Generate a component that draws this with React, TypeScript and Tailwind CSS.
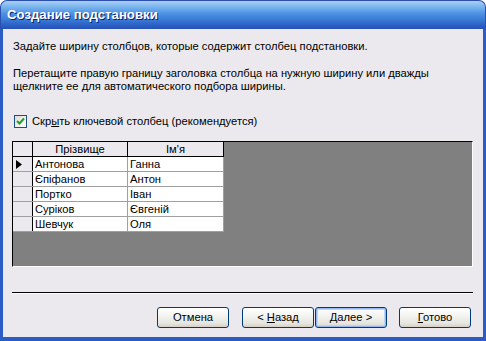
import React from "react";

const font = { fontFamily: '"Liberation Sans", Arial, sans-serif' };

function Btn({ children, def }: { children: React.ReactNode; def?: boolean }) {
  return (
    <div
      className={
        "w-[72px] h-[21px] rounded-[3px] border border-[#003c74] flex items-center justify-center text-[11.2px] text-black bg-[linear-gradient(to_bottom,#ffffff_0%,#f4f4f0_40%,#e6e6e0_80%,#d6d0c5_100%)] " +
        (def ? "shadow-[inset_0_0_0_1px_#97b8ec,inset_0_0_0_2px_#bcd4f6]" : "")
      }
    >
      <span className="whitespace-pre">{children}</span>
    </div>
  );
}

const rows = [
  ["Антонова", "Ганна"],
  ["Єпіфанов", "Антон"],
  ["Портко", "Іван"],
  ["Суріков", "Євгеній"],
  ["Шевчук", "Оля"],
];

export default function App() {
  return (
    <div className="w-[486px] h-[341px] flex flex-col bg-white" style={font}>
      <div className="h-[29px] shrink-0 rounded-t-[7px] bg-[linear-gradient(to_bottom,#a9d0f5_0%,#7db6ee_20%,#4c92e3_45%,#3a7ed8_65%,#2d62c6_85%,#2650b6_100%)] border-t border-x border-[#2a4fae] flex items-center pl-[6px]">
        <span className="text-white font-bold text-[13.2px] [text-shadow:1px_1px_0_#0a1f6a]">
          Создание подстановки
        </span>
      </div>
      <div className="flex-1 flex flex-col bg-[#ebe9ed] border-l-[3px] border-r-[3px] border-b-[4px] border-[#2b5cc6] pl-[9px] pr-[10px] text-[11.2px] text-black leading-[13px]">
        <div className="mt-[11px] pl-[1px]">
          Задайте ширину столбцов, которые содержит столбец подстановки.
        </div>
        <div className="mt-[14px] pl-[1px]">
          Перетащите правую границу заголовка столбца на нужную ширину или дважды
          <br />
          щелкните ее для автоматического подбора ширины.
        </div>
        <div className="mt-[22px] flex items-center pl-[2px]">
          <div className="w-[13px] h-[13px] border border-[#1c5180] bg-[linear-gradient(135deg,#dcdcd7,#ffffff)] flex items-center justify-center">
            <svg width="9" height="9" viewBox="0 0 9 9">
              <path d="M1 4 L3.5 6.5 L8 1.5" stroke="#21a121" strokeWidth="2" fill="none" />
            </svg>
          </div>
          <span className="ml-[5px]">
            Скр<span className="underline">ы</span>ть ключевой столбец (рекомендуется)
          </span>
        </div>
        <div className="mt-[13px] h-[126px] bg-[#808080] border-t border-l border-t-black border-l-black border-r border-b border-r-white border-b-white">
          <div className="w-[211px] bg-white">
            <div className="flex h-[15px] bg-[#ebe9ed] border-b border-black">
              <div className="w-[20px] border-r border-black" />
              <div className="w-[95px] border-r border-black text-center leading-[14px]">Прізвище</div>
              <div className="w-[96px] border-r border-black text-center leading-[14px]">Ім'я</div>
            </div>
            {rows.map((r, i) => (
              <div key={i} className="flex h-[15px] border-b border-[#a0a0a0]">
                <div className="w-[20px] bg-[#ebe9ed] border-r border-black flex items-center pl-[3px]">
                  {i === 0 && (
                    <svg width="6" height="9" viewBox="0 0 6 9">
                      <path d="M0 0 L6 4.5 L0 9 Z" fill="black" />
                    </svg>
                  )}
                </div>
                <div className="w-[95px] border-r border-[#a0a0a0] pl-[2px] leading-[14px]">{r[0]}</div>
                <div className="w-[96px] border-r border-[#a0a0a0] pl-[2px] leading-[14px]">{r[1]}</div>
              </div>
            ))}
          </div>
        </div>
        <div className="mt-[25px] h-[2px] border-t border-black border-b border-b-white" />
        <div className="mt-[13px] flex">
          <div className="ml-[145px]">
            <Btn>Отмена</Btn>
          </div>
          <div className="ml-[13px]">
            <Btn>
              {"< "}<span className="underline">Н</span>азад
            </Btn>
          </div>
          <div className="ml-[1px]">
            <Btn def>
              <span className="underline">Д</span>{"алее >"}
            </Btn>
          </div>
          <div className="ml-[12px]">
            <Btn>
              <span className="underline">Г</span>отово
            </Btn>
          </div>
        </div>
      </div>
    </div>
  );
}
